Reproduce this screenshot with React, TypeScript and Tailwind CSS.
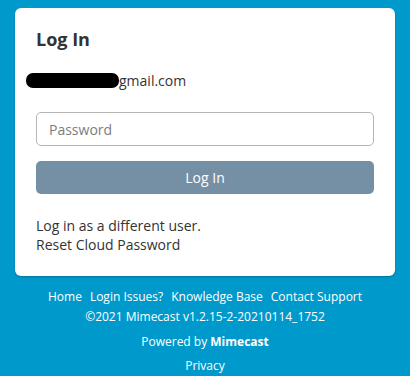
export default function App() {
  return (
    <div
      className="min-h-[376px] w-full bg-[#0099cc] pt-[8px]"
      style={{fontFamily: '"Open Sans", "Liberation Sans", sans-serif'}}
    >
      <div className="mx-[15px] rounded-[6px] bg-white px-[21px] pt-[19px] pb-[22px] shadow-[0_1px_2px_rgba(0,0,0,0.25)]">
        <h1 className="text-[18px] leading-[25px] font-bold text-[#333]">Log In</h1>
        <div className="mt-[18px] -ml-[10px] flex h-[20px] items-center text-[14px] text-[#333]">
          <span className="inline-block h-[15px] w-[93px] rounded-[7px] bg-black" />
          <span>gmail.com</span>
        </div>
        <input
          autoFocus
          className="mt-[22px] block h-[34px] w-full rounded-[5px] border border-[#b5b5b5] px-[12px] text-[14px] text-[#333] caret-[#333] outline-none placeholder:text-[#7d7d7d]"
          placeholder="Password"
          type="password"
        />
        <button className="mt-[15px] flex h-[33px] w-full items-center justify-center rounded-[5px] bg-[#7590a4] text-[14px] text-white">
          Log In
        </button>
        <div className="mt-[22px] flex flex-col text-[14px] leading-[19px] text-[#333]">
          <span>Log in as a different user.</span>
          <span>Reset Cloud Password</span>
        </div>
      </div>
      <div className="mt-[12px] flex flex-col items-center text-[12px] text-white">
        <div className="flex gap-[8px] leading-[17px]">
          <span>Home</span>
          <span>Login Issues?</span>
          <span>Knowledge Base</span>
          <span>Contact Support</span>
        </div>
        <div className="mt-[3px] leading-[17px]">©2021 Mimecast v1.2.15-2-20210114_1752</div>
        <div className="mt-[8px] leading-[17px]">
          Powered by <span className="font-bold">Mimecast</span>
        </div>
        <div className="mt-[7px] leading-[17px]">Privacy</div>
      </div>
    </div>
  )
}
